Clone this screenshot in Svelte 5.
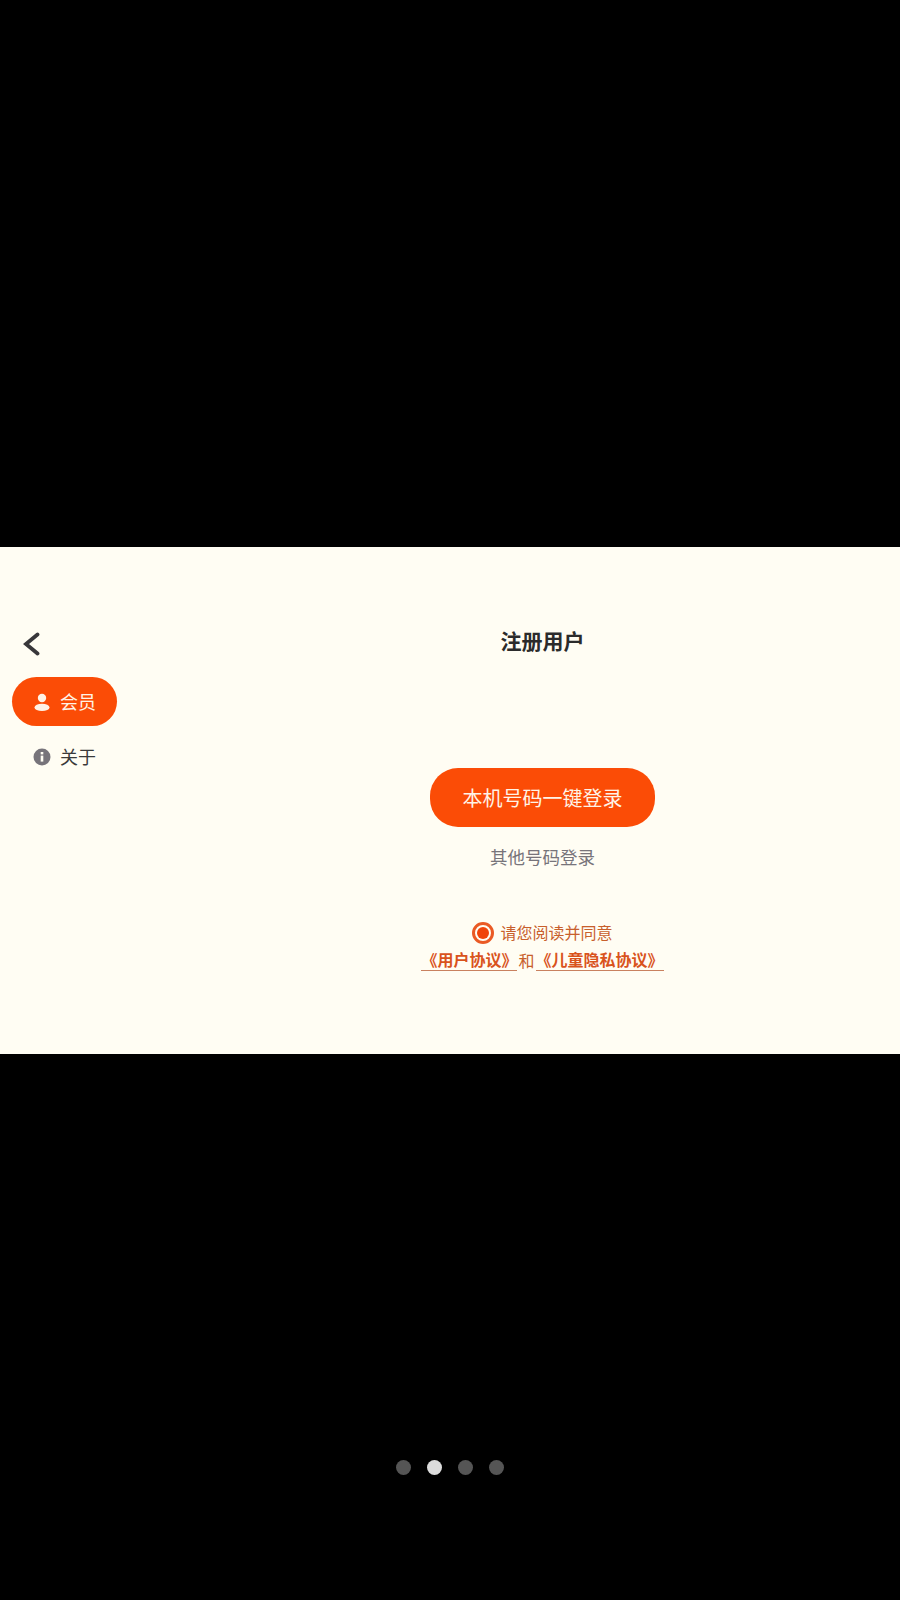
<script lang="ts">
  let agreed = $state(true);
  let activeTab = $state("member");
  const dots = [0, 1, 2, 3];
</script>

<div class="screen">
  <div class="band">
    <aside class="side">
      <button type="button" class="back" aria-label="返回">
        <svg viewBox="0 0 17 24" width="17" height="24" fill="none" stroke="#38373a" stroke-width="3.800" stroke-linecap="round" stroke-linejoin="miter">
          <path d="M14.500 2.500 L3 12 L14.500 21.500" />
        </svg>
      </button>
      <button type="button" class="tab" class:active={activeTab === "member"} onclick={() => (activeTab = "member")}>
        <svg viewBox="0 0 18 18" width="18" height="18" fill="currentColor">
          <circle cx="9" cy="5" r="4.200" />
          <ellipse cx="9" cy="14.400" rx="7.500" ry="3.600" />
        </svg>
        <span class="label">会员</span>
      </button>
      <button type="button" class="tab" class:active={activeTab === "about"} onclick={() => (activeTab = "about")}>
        <svg viewBox="0 0 18 18" width="18" height="18">
          <circle cx="9" cy="9" r="8.500" fill="#77747a" />
          <rect x="7.700" y="7.600" width="2.600" height="6" fill="#fffdf3" />
          <rect x="7.700" y="4" width="2.600" height="2.400" fill="#fffdf3" />
        </svg>
        <span class="label">关于</span>
      </button>
    </aside>

    <main class="content">
      <h1>注册用户</h1>
      <button type="button" class="login">本机号码一键登录</button>
      <button type="button" class="other">其他号码登录</button>
      <div class="agree">
        <button type="button" class="radio" aria-label="同意" onclick={() => (agreed = !agreed)}>
          {#if agreed}<span></span>{/if}
        </button>
        请您阅读并同意
      </div>
      <div class="links">
        <span class="link">《用户协议》</span>
        <span class="and">和</span>
        <span class="link">《儿童隐私协议》</span>
      </div>
    </main>
  </div>

  <div class="dots">
    {#each dots as d}
      <span class="dot" class:on={d === 1}></span>
    {/each}
  </div>
</div>

<style>
  :global(body) {
    margin: 0;
    background: #000;
  }

  .screen {
    width: 900px;
    height: 1600px;
    padding-top: 547px;
    box-sizing: border-box;
    display: flex;
    flex-direction: column;
    font-family: "Noto Sans CJK SC", "Noto Sans", sans-serif;
  }

  button {
    appearance: none;
    border: 0;
    background: transparent;
    padding: 0;
    font: inherit;
    cursor: pointer;
  }

  .band {
    height: 507px;
    background: #fffdf3;
    display: flex;
  }

  .side {
    width: 186px;
    padding: 85px 0 0 12px;
    box-sizing: border-box;
    display: flex;
    flex-direction: column;
    align-items: flex-start;
  }

  .back {
    margin-left: 11px;
    height: 24px;
    display: flex;
    margin-bottom: 21px;
  }

  .tab {
    width: 105px;
    height: 49px;
    border-radius: 25px;
    display: flex;
    align-items: center;
    justify-content: center;
    gap: 9px;
    font-size: 18px;
    color: #3a3a3a;
    margin-bottom: 6px;
  }

  .label {
    margin-top: -2px;
  }

  .tab.active {
    background: #fb4c06;
    color: #fff3e6;
  }

  .content {
    flex: 1;
    display: flex;
    flex-direction: column;
    align-items: center;
    padding: 77px 1px 0 0;
    box-sizing: border-box;
  }

  h1 {
    margin: 0 0 112px;
    font-size: 21px;
    line-height: 32px;
    font-weight: 700;
    color: #2b2b2b;
  }

  .login {
    width: 225px;
    height: 59px;
    flex: none;
    border-radius: 28px;
    background: #fb4c06;
    color: #fff3e6;
    font-size: 20px;
  }

  .other {
    margin-top: 17px;
    font-size: 17.500px;
    line-height: 26px;
    color: #77747a;
  }

  .agree {
    margin-top: 50px;
    height: 24px;
    display: flex;
    align-items: center;
    gap: 6px;
    font-size: 16px;
    color: #c8602c;
  }

  .radio {
    width: 22px;
    height: 22px;
    margin-top: 2px;
    border: 3px solid #ea5a24;
    border-radius: 50%;
    box-sizing: border-box;
    display: flex;
    align-items: center;
    justify-content: center;
  }

  .radio span {
    width: 12px;
    height: 12px;
    border-radius: 50%;
    background: #f0440a;
  }

  .links {
    margin-top: 4px;
    display: flex;
    align-items: center;
    font-size: 16px;
    line-height: 22px;
    color: #d9531c;
  }

  .link {
    font-weight: 700;
    border-bottom: 1px solid #c9815f;
  }

  .and {
    margin: 0 1px;
    color: #c8602c;
  }

  .dots {
    margin-top: 406px;
    display: flex;
    justify-content: center;
    gap: 16px;
  }

  .dot {
    width: 15px;
    height: 15px;
    border-radius: 50%;
    background: #555;
  }

  .dot.on {
    background: #dcdcdc;
  }
</style>
